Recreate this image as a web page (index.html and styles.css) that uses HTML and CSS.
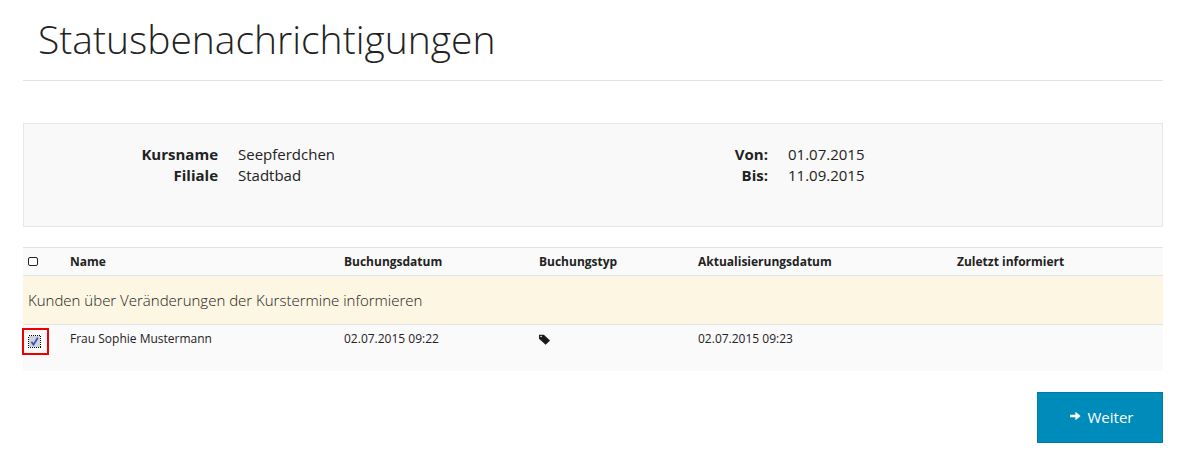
FILE: index.html
```html
<!DOCTYPE html>
<html lang="de">
<head>
<meta charset="utf-8">
<title>Statusbenachrichtigungen</title>
<link rel="stylesheet" href="styles.css">
</head>
<body>
<main class="page">
  <header class="page-header"><h1>Statusbenachrichtigungen</h1></header>
  <section class="info">
    <dl class="info-col info-left">
      <dt>Kursname</dt><dd>Seepferdchen</dd>
      <dt>Filiale</dt><dd>Stadtbad</dd>
    </dl>
    <dl class="info-col info-right">
      <dt>Von:</dt><dd>01.07.2015</dd>
      <dt>Bis:</dt><dd>11.09.2015</dd>
    </dl>
  </section>
  <table class="list">
    <colgroup>
      <col class="c1"><col class="c2"><col class="c3"><col class="c4"><col class="c5"><col>
    </colgroup>
    <thead>
      <tr>
        <th><span class="box"></span></th>
        <th>Name</th>
        <th>Buchungsdatum</th>
        <th>Buchungstyp</th>
        <th>Aktualisierungsdatum</th>
        <th>Zuletzt informiert</th>
      </tr>
    </thead>
    <tbody>
      <tr class="notice"><td colspan="6">Kunden über Veränderungen der Kurstermine informieren</td></tr>
      <tr class="entry">
        <td class="check-cell">
          <span class="highlight">
            <svg class="checked" viewBox="0 0 13 13" width="13" height="13" shape-rendering="crispEdges">
              <rect x="0.5" y="0.5" width="12" height="12" fill="#d0d3dc" stroke="#fff"/>
              <rect x="0.5" y="0.5" width="12" height="12" fill="none" stroke="#000" stroke-dasharray="1 1"/>
              <path d="M3.4 6.8 5.5 9.8 9.8 2.8" fill="none" stroke="#2f55b5" stroke-width="1.7" shape-rendering="auto"/>
            </svg>
          </span>
        </td>
        <td>Frau Sophie Mustermann</td>
        <td>02.07.2015 09:22</td>
        <td>
          <svg class="tag" viewBox="0 0 10 10" width="11" height="11">
            <path d="M0 0.6H4.4L10 5.8 6 9.8 0 4.4Z" fill="#1a1a1a"/>
            <circle cx="1.9" cy="2.3" r="0.7" fill="#fafafa"/>
          </svg>
        </td>
        <td>02.07.2015 09:23</td>
        <td></td>
      </tr>
    </tbody>
  </table>
  <div class="actions">
    <button class="next" type="button">
      <svg viewBox="0 0 11 10" width="11" height="10"><path d="M0 3.7H5.4V0.8L10.6 5 5.4 9.2V6.3H0Z" fill="#fff"/></svg>
      Weiter
    </button>
  </div>
</main>
</body>
</html>
```
FILE: styles.css
```css
* { box-sizing: border-box; }
html, body { margin: 0; padding: 0; background: #fff; }
body {
  font-family: "Open Sans", "Liberation Sans", sans-serif;
  color: #222;
  font-size: 14px;
}
.page { width: 1140px; margin-left: 23px; }
.page-header {
  height: 81px;
  padding: 13px 0 0 15px;
  border-bottom: 1px solid #e2e2e2;
}
h1 {
  margin: 0;
  font-size: 39px;
  font-weight: 300;
  line-height: 52px;
  color: #222;
}
.info {
  display: flex;
  height: 104px;
  margin-top: 42px;
  padding-top: 20px;
  background: #f9f9f9;
  border: 1px solid #e7e7e7;
}
.info-col {
  display: grid;
  grid-auto-rows: 21px;
  margin: 0;
  font-size: 15px;
  line-height: 21px;
  align-content: start;
  column-gap: 20px;
}
.info-left { grid-template-columns: 194px auto; width: 570px; }
.info-right { grid-template-columns: 174px auto; }
dt { font-weight: 700; text-align: right; }
dd { margin: 0; }
.list {
  width: 100%;
  margin-top: 20px;
  border-collapse: collapse;
  table-layout: fixed;
  font-size: 12px;
}
.c1 { width: 42px; }
.c2 { width: 274px; }
.c3 { width: 195px; }
.c4 { width: 159px; }
.c5 { width: 259px; }
th {
  height: 28px;
  padding: 0 5px;
  text-align: left;
  font-weight: 700;
  background: #fafafa;
  border-top: 1px solid #e2e2e2;
  border-bottom: 1px solid #e2e2e2;
}
.box {
  display: block;
  width: 10px;
  height: 9px;
  border: 1px solid #222;
  border-radius: 2px;
  background: #fff;
}
.notice td {
  height: 49px;
  padding: 0 5px;
  font-size: 15px;
  font-weight: 300;
  background: #fdf6e3;
  border-bottom: 1px solid #e2e2e2;
}
.entry td {
  height: 46px;
  padding: 6px 5px 0;
  vertical-align: top;
  line-height: 16px;
  background: #fafafa;
}
.entry .check-cell { padding: 0; position: relative; }
.highlight {
  position: absolute;
  left: -1px;
  top: 3px;
  display: flex;
  width: 27px;
  height: 27px;
  padding: 5px 0 0 4px;
  border: 2px solid #ee0000;
}
.checked { display: block; flex: none; width: 13px; height: 13px; }
.tag { display: block; margin-top: 3px; }
.actions {
  display: flex;
  justify-content: flex-end;
  margin-top: 21px;
}
.next {
  display: flex;
  align-items: center;
  justify-content: center;
  gap: 7px;
  width: 126px;
  height: 51px;
  padding: 0 0 0 3px;
  background: #008cba;
  border: 1px solid #007ba3;
  color: #fff;
  font: 400 15px "Open Sans", "Liberation Sans", sans-serif;
}
.next svg { margin-top: -3px; }
```
